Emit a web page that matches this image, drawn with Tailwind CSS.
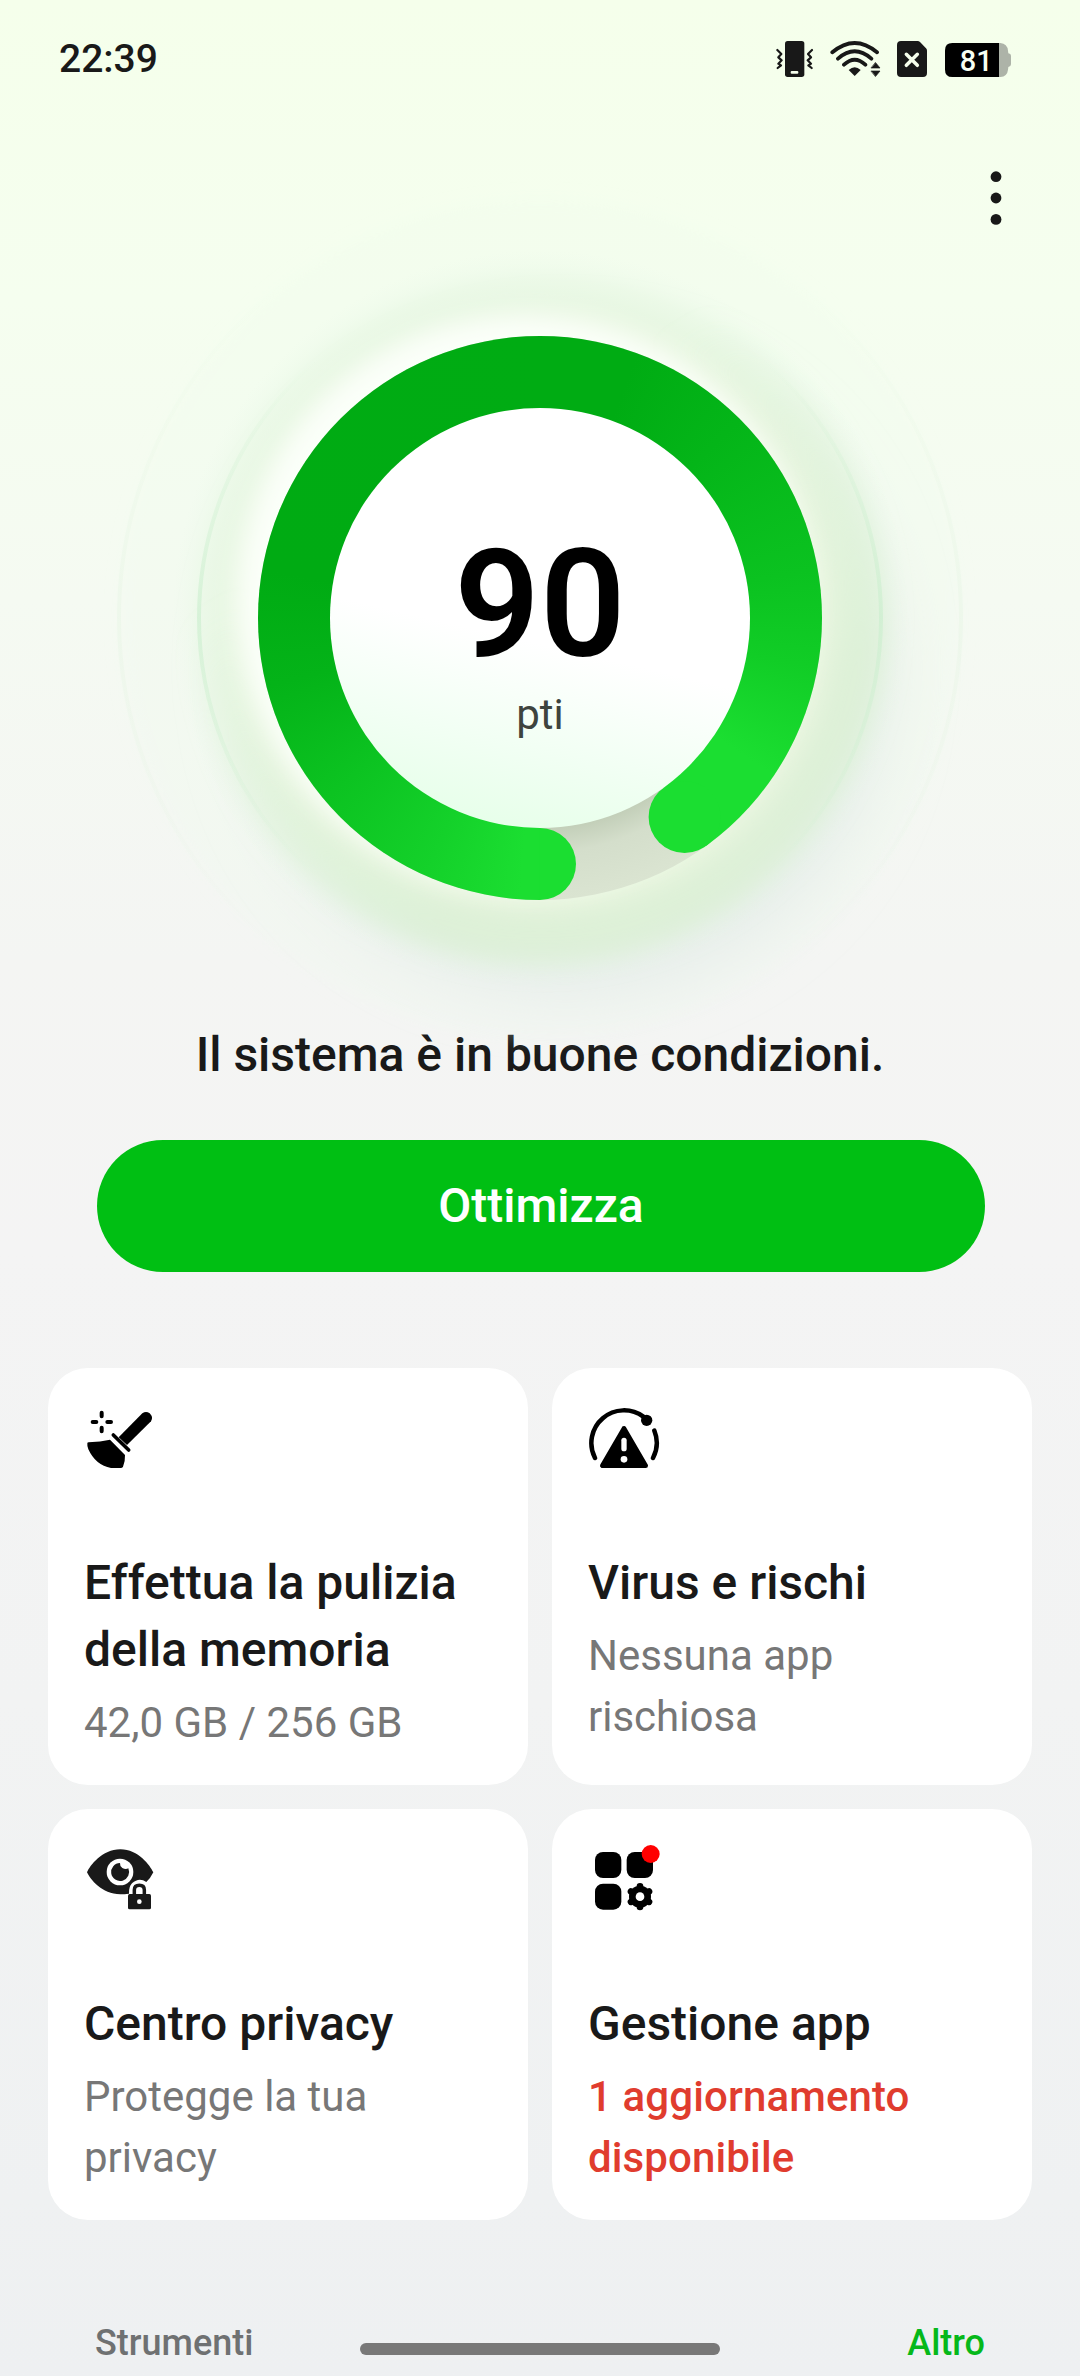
<!DOCTYPE html>
<html lang="it">
<head>
<meta charset="utf-8">
<title>Gestione telefono</title>
<script src="https://cdn.jsdelivr.net/npm/@tailwindcss/browser@4"></script>
</head>
<body class="font-[Roboto,sans-serif] text-[#191919]">
<div class="flex h-[2376px] w-[1080px] flex-col overflow-hidden bg-[linear-gradient(180deg,#f5ffeb_0px,#f5feef_300px,#f5faf2_600px,#f4f5f3_960px,#f4f4f4_1250px,#f2f3f3_1700px,#eff1f2_2200px,#eef0f2_2376px)]">

  <!-- status bar -->
  <header class="flex h-[118px] shrink-0 items-center pr-[69px] pl-[59px]">
    <span class="mr-auto text-[39px] leading-none font-medium">22:39</span>
    <svg class="mr-4 h-[38px] w-[38px]" viewBox="109 60 114 114" fill="#181818">
      <rect x="136" y="63" width="58" height="108" rx="8"/>
      <rect x="153" y="153" width="23" height="8" rx="3" fill="#f5feec"/>
      <path d="M113 90l12 12-9 10 10 9-10 10 8 5-10 8M217 90l-12 12 9 10-10 9 10 10-8 5 10 8" fill="none" stroke="#181818" stroke-width="6.5" stroke-linejoin="round" stroke-linecap="round"/>
    </svg>
    <svg class="mr-[15px] h-[38px] w-[52px]" viewBox="271 60 156 114" fill="none" stroke="#181818" stroke-width="11.5" stroke-linecap="round">
      <path d="M278 97Q345 41 412 97M295 116Q345 72 395 116M313 134Q345 104 377 134"/>
      <path d="M345 168l-18-18q18-17 36 0z" fill="#181818" stroke="none"/>
      <path d="M408 128l13 16h-26zM408 169l13-16h-26z" fill="#181818" stroke="#181818" stroke-width="2" stroke-linejoin="round"/>
    </svg>
    <svg class="mr-[18px] h-[38px] w-[30px]" viewBox="471 60 90 114">
      <path d="M483 63h50q4 0 7 3l18 19q3 3 3 7v67q0 12-12 12h-66q-12 0-12-12V75q0-12 12-12z" fill="#181818"/>
      <path d="M499 103l33 33M532 103l-33 33" stroke="#f5feec" stroke-width="10.5" stroke-linecap="round"/>
    </svg>
    <svg class="h-[38px] w-[66px]" viewBox="615 60 198 114">
      <path d="M777 69h4q21 2 23 23l1 8q8 1 8 7v26q0 6-8 8l-1 8q-2 20-23 22h-4z" fill="#adb3a8"/>
      <path d="M777 69v102H637q-22 0-22-22V91q0-22 22-22z" fill="#000"/>
      <text x="709" y="152.500" text-anchor="middle" font-family="Roboto" font-size="87" font-weight="500" fill="#f7fff2">81</text>
    </svg>
  </header>

  <div class="flex h-[218px] shrink-0 justify-end pt-[53px] pr-[78px]">
    <svg class="h-[54px] w-3" viewBox="0 0 12 54" fill="#181818"><circle cx="6" cy="5.7" r="5.4"/><circle cx="6" cy="27" r="5.4"/><circle cx="6" cy="48.4" r="5.4"/></svg>
  </div>

  <!-- score gauge -->
  <section class="relative isolate grid size-[564px] shrink-0 self-center">
    <svg class="absolute -top-[218px] -left-[218px] -z-10 size-[1000px]" viewBox="-500 -500 1000 1000">
      <defs>
        <radialGradient id="halo" gradientUnits="userSpaceOnUse" cx="0" cy="0" r="368">
          <stop offset=".78" stop-color="#e9f6e0"/>
          <stop offset=".87" stop-color="#e7f7e2" stop-opacity=".9"/>
          <stop offset=".92" stop-color="#e7f7e3" stop-opacity=".6"/>
          <stop offset=".96" stop-color="#e9f8e7" stop-opacity=".25"/>
          <stop offset="1" stop-color="#ebf8ea" stop-opacity="0"/>
        </radialGradient>
        <linearGradient id="depth" x1="0" y1="0" x2=".6" y2="1">
          <stop offset=".35" stop-color="#d5edcf" stop-opacity="0"/>
          <stop offset=".85" stop-color="#d4ecce" stop-opacity=".5"/>
        </linearGradient>
        <linearGradient id="edge" x1="0" y1="0" x2="0" y2="1">
          <stop offset=".12" stop-color="#cdf1d0" stop-opacity="0"/>
          <stop offset=".5" stop-color="#c8eecc" stop-opacity=".6"/>
          <stop offset=".88" stop-color="#cdf1d0" stop-opacity="0"/>
        </linearGradient>
        <linearGradient id="wave" x1="0" y1="0" x2="0" y2="1">
          <stop offset=".1" stop-color="#dff2dd" stop-opacity="0"/>
          <stop offset=".5" stop-color="#dff2dd" stop-opacity=".3"/>
          <stop offset=".9" stop-color="#dff2dd" stop-opacity="0"/>
        </linearGradient>
        <filter id="b30" x="-50%" y="-50%" width="200%" height="200%"><feGaussianBlur stdDeviation="30"/></filter>
        <filter id="b12" x="-50%" y="-50%" width="200%" height="200%"><feGaussianBlur stdDeviation="12"/></filter>
        <filter id="b8" x="-50%" y="-50%" width="200%" height="200%"><feGaussianBlur stdDeviation="8"/></filter>
      </defs>
      <circle r="420" fill="#ebf8e9" fill-opacity=".2" filter="url(#b8)"/>
      <circle r="421" fill="none" stroke="url(#wave)" stroke-width="4"/>
      <circle cx="26" cy="50" r="325" fill="#e2eae7" fill-opacity=".75" filter="url(#b30)"/>
      <circle r="368" fill="url(#halo)"/>
      <circle r="320" fill="none" stroke="url(#depth)" stroke-width="54" filter="url(#b12)"/>
      <circle cx="-16" cy="-16" r="287" fill="#fbfff9" filter="url(#b12)"/>
      <circle r="341" fill="none" stroke="url(#edge)" stroke-width="4"/>
    </svg>
    <div class="rounded-full bg-[radial-gradient(circle,#c3cfb9_210px,#d4decb_235px,#dae4d1_282px)] [grid-area:1/1]"></div>
    <div class="rounded-full bg-[conic-gradient(#00ac13_0deg,#00ac13_20deg,#04b518_45deg,#0bc220_80deg,#11cd26_100deg,#1bde31_124deg,#1bde31_144deg,transparent_144deg,transparent_180deg,#1bde31_180deg,#1bde31_184deg,#14d12a_204deg,#0cc321_230deg,#04b318_256deg,#00ab13_280deg,#00ac13_360deg)] [grid-area:1/1]"></div>
    <svg class="size-[564px] [grid-area:1/1]" viewBox="-282 -282 564 564" fill="#1bde31"><path d="M-.5 210h.5a36 36 0 0 1 0 72h-.5z"/><circle cx="144.600" cy="199" r="36"/></svg>
    <div class="flex size-[420px] flex-col items-center self-center justify-self-center rounded-full bg-[linear-gradient(193deg,#fff_0%,#fff_55%,#f2fff4_75%,#e4ffe7_97%)] pt-[122px] [grid-area:1/1]">
      <span class="text-[150px] leading-[150px] font-semibold text-black">90</span>
      <span class="mt-[10px] text-[42px] leading-[50px] text-[#3e443e]">pti</span>
    </div>
  </section>

  <h1 class="mt-[123px] shrink-0 text-center text-[48px] leading-[64px] font-medium">Il sistema è in buone condizioni.</h1>
  <button class="mt-[53px] ml-[97px] h-[132px] w-[888px] shrink-0 rounded-[66px] bg-[#00bf13] text-[48px] font-medium text-white">Ottimizza</button>

  <!-- feature cards -->
  <main class="mt-[96px] grid shrink-0 grid-cols-2 grid-rows-[417px_411px] gap-6 px-12">
    <article class="rounded-[40px] bg-white p-9">
      <svg class="size-[72px]" viewBox="72 72 216 216">
        <path d="M125 98v11M125 143v11M98 126h11M142 126h11" stroke="#000" stroke-width="12" stroke-linecap="round"/>
        <path d="M82 190q0-3 4-3 36-1 64-8l45 46q1 17-6 35-2 4-7 4h-29q-46-8-68-56-4-9-3-18z"/>
        <path d="M160 165l46 45" stroke="#000" stroke-width="11" stroke-linecap="round"/>
        <path d="M176 172l71-72q11-8 22 0 12 11 4 24l-72 71z"/>
      </svg>
      <h2 class="mt-[73px] w-[400px] text-[48px] leading-[67px] font-medium">Effettua la pulizia della memoria</h2>
      <p class="mt-[9px] text-[42px] leading-[61px] text-[#777]">42,0 GB / 256 GB</p>
    </article>
    <article class="rounded-[40px] bg-white p-9">
      <svg class="size-[72px]" viewBox="84 72 216 216">
        <path d="M105 234A98 98 0 0 1 250 110M283 152A98 98 0 0 1 279 234" fill="none" stroke="#000" stroke-width="13.500" stroke-linecap="round"/>
        <circle cx="260" cy="121" r="17"/>
        <path d="M192 145L127 257h130z" stroke="#000" stroke-width="14" stroke-linejoin="round"/>
        <path d="M192 181v25" stroke="#fff" stroke-width="16" stroke-linecap="round"/>
        <circle cx="192" cy="238" r="10" fill="#fff"/>
      </svg>
      <h2 class="mt-[73px] text-[48px] leading-[67px] font-medium">Virus e rischi</h2>
      <p class="mt-[9px] w-[300px] text-[42px] leading-[61px] text-[#777]">Nessuna app rischiosa</p>
    </article>
    <article class="rounded-[40px] bg-white p-9">
      <svg class="size-[72px]" viewBox="72 75 216 216" fill="#191919">
        <path d="M81 157C90 137 126 88 181 88C236 88 270 137 280 157Q272 174 259 186Q237 170 216 190Q206 200 207 221Q193 223 181 223C126 223 90 177 81 157z"/>
        <circle cx="180" cy="156" r="40" fill="#fff"/>
        <path d="M180 129a27 27 0 1 0 25 16q-8 5-18-1-8-6-7-15z"/>
        <rect x="204" y="222" width="69" height="46" rx="5"/>
        <path d="M223 223v-13q0-14 15-14t15 14v13" fill="none" stroke="#191919" stroke-width="10.500"/>
        <circle cx="238" cy="245" r="7" fill="#fff"/>
      </svg>
      <h2 class="mt-[73px] text-[48px] leading-[67px] font-medium">Centro privacy</h2>
      <p class="mt-[9px] w-[320px] text-[42px] leading-[61px] text-[#777]">Protegge la tua privacy</p>
    </article>
    <article class="rounded-[40px] bg-white p-9">
      <svg class="size-[72px]" viewBox="84 75 216 216">
        <rect x="105" y="96" width="79" height="78" rx="24"/>
        <rect x="200" y="96" width="79" height="78" rx="24"/>
        <rect x="105" y="191" width="79" height="78" rx="24"/>
        <circle cx="240" cy="230" r="33"/>
        <path d="M240 199v62M213 214.500l54 31M213 245.500l54-31" stroke="#000" stroke-width="20" stroke-linecap="round"/>
        <circle cx="240" cy="230" r="13" fill="#fff"/>
        <circle cx="272" cy="102" r="27" fill="#f00"/>
      </svg>
      <h2 class="mt-[73px] text-[48px] leading-[67px] font-medium">Gestione app</h2>
      <p class="mt-[9px] w-[360px] text-[42px] leading-[61px] font-medium tracking-[0.12px] text-[#e03c2e]">1 aggiornamento disponibile</p>
    </article>
  </main>

  <footer class="mt-[103px] flex shrink-0 items-center justify-between px-[95px] text-[36px] leading-[40px]">
    <span class="w-[200px] font-medium text-[#6f7172]">Strumenti</span>
    <span class="mt-3 h-3 w-[360px] rounded-full bg-[#787878]"></span>
    <span class="w-[200px] text-right font-medium text-[#06b81a]">Altro</span>
  </footer>
</div>
</body>
</html>
